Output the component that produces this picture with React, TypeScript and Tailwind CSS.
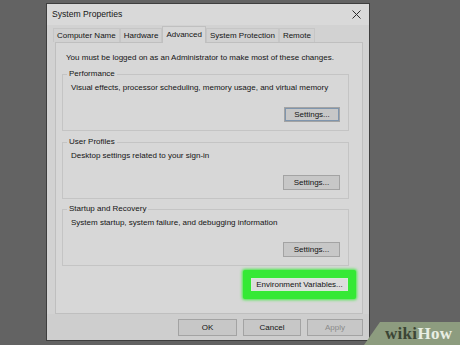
import React from "react";

const font = { fontFamily: '"Liberation Sans", Arial, sans-serif' };

const Btn = ({
  children,
  className = "",
  muted = false,
}: {
  children: React.ReactNode;
  className?: string;
  muted?: boolean;
}) => (
  <div
    className={`flex items-center justify-center border border-[#a3a3a3] bg-[#c7c7c7] text-[8px] leading-none ${
      muted ? "text-[#8a8a8a]" : "text-[#141414]"
    } ${className}`}
  >
    {children}
  </div>
);

const Group = ({
  title,
  desc,
  focused = false,
  className = "",
}: {
  title: string;
  desc: string;
  focused?: boolean;
  className?: string;
}) => (
  <div
    className={`relative ml-[6px] mr-[13px] h-[57px] border border-[#c4c4c4] px-[8px] pt-[8px] ${className}`}
  >
    <span className="absolute left-[4px] top-[-6px] bg-[#d7d7d7] px-[2px] text-[8px] leading-[10px] text-[#141414]">
      {title}
    </span>
    <div className="text-[8px] leading-[10px] text-[#141414]">{desc}</div>
    <div className="mt-[14px] flex justify-end">
      {focused ? (
        <Btn className="h-[15px] w-[56px] border-[#2f4c70] shadow-[inset_0_0_0_1px_#7f95ad]">
          Settings...
        </Btn>
      ) : (
        <Btn className="h-[15px] w-[57px]">Settings...</Btn>
      )}
    </div>
  </div>
);

const tabs = ["Computer Name", "Hardware", "Advanced", "System Protection", "Remote"];

export default function App() {
  return (
    <div
      className="relative h-[345px] w-[460px] overflow-hidden bg-[#636363]"
      style={font}
    >
      {/* dialog */}
      <div className="ml-[46px] mt-[3px] flex h-[338px] w-[324px] flex-col border border-[#3e3e3e] bg-[#d2d2d2]">
        {/* title bar */}
        <div className="flex h-[21px] items-center justify-between bg-[#d9d9d9] pl-[5px] pr-[8px]">
          <span className="text-[8.6px] leading-none text-[#161616]">System Properties</span>
          <svg width="9" height="9" viewBox="0 0 9 9">
            <path d="M0.5 0.5 L8.5 8.5 M8.5 0.5 L0.5 8.5" stroke="#2a2a2a" strokeWidth="1" />
          </svg>
        </div>

        {/* tabs */}
        <div className="flex h-[17px] items-end pl-[6px]">
          {tabs.map((t) =>
            t === "Advanced" ? (
              <div
                key={t}
                className="relative z-10 mb-[-1px] flex h-[17px] items-center border border-b-0 border-[#c0c0c0] bg-[#d7d7d7] px-[3px] pb-[1px] text-[8px] leading-none text-[#141414]"
              >
                {t}
              </div>
            ) : (
              <div
                key={t}
                className="flex h-[14px] items-center border border-[#c6c6c6] border-b-0 bg-[#d1d1d1] px-[3px] text-[8px] leading-none text-[#141414]"
              >
                {t}
              </div>
            )
          )}
        </div>

        {/* panel */}
        <div className="ml-[8px] mr-[6px] flex h-[272px] flex-col border border-[#bfbfbf] bg-[#d7d7d7]">
          <div className="mt-[10px] pl-[10px] text-[8px] leading-[10px] text-[#141414]">
            You must be logged on as an Administrator to make most of these changes.
          </div>
          <Group
            className="mt-[11px]"
            title="Performance"
            desc="Visual effects, processor scheduling, memory usage, and virtual memory"
            focused
          />
          <Group
            className="mt-[11px]"
            title="User Profiles"
            desc="Desktop settings related to your sign-in"
          />
          <Group
            className="mt-[10px]"
            title="Startup and Recovery"
            desc="System startup, system failure, and debugging information"
          />
          <div className="mt-[4px] mr-[6px] flex justify-end">
            <div className="rounded-[2px] bg-[#35e935] px-[8px] py-[8px] shadow-[0_0_3px_1px_#49e949]">
              <Btn className="h-[13px] w-[97px] border-[#d8e8d8] bg-[#dcdcdc]">
                Environment Variables...
              </Btn>
            </div>
          </div>
        </div>

        {/* bottom buttons */}
        <div className="flex flex-1 items-start justify-end gap-[6px] bg-[#cecece] pr-[6px] pt-[5px]">
          <Btn className="h-[17px] w-[59px]">OK</Btn>
          <Btn className="h-[17px] w-[58px]">Cancel</Btn>
          <Btn className="h-[17px] w-[56px]" muted>
            Apply
          </Btn>
        </div>
      </div>

      {/* wikiHow watermark */}
      <div className="absolute bottom-0 right-0 h-[23px] w-[96px]">
        <svg className="absolute inset-0" width="96" height="23" viewBox="0 0 96 23">
          <polygon points="16,0 96,0 96,23 0,23" fill="#8d9c7f" />
        </svg>
        <div
          className="absolute bottom-[3px] left-[21px] text-[17px] font-bold leading-none tracking-[0.3px]"
          style={{ fontFamily: '"Liberation Serif", "Times New Roman", serif' }}
        >
          <span className="text-[#3b4535]">wiki</span>
          <span className="text-[#e9eee3]">How</span>
        </div>
      </div>
    </div>
  );
}
